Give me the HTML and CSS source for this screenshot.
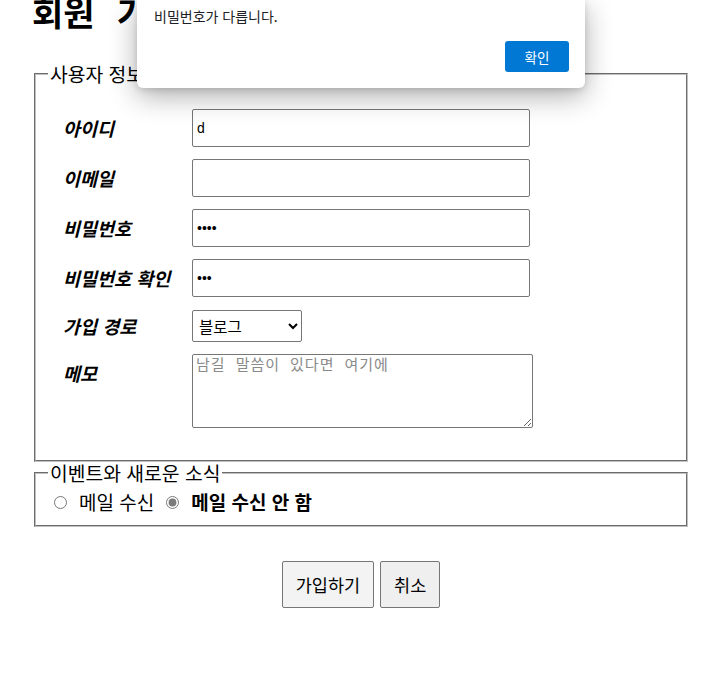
FILE: index.html
```html
<!DOCTYPE html>
<html lang="ko">
<head>
<meta charset="utf-8">
<title>회원 가입</title>
<link rel="stylesheet" href="styles.css">
</head>
<body>
<div class="page">
  <h1 class="title">회원 가입</h1>
  <form class="signup">
    <fieldset class="box box-user">
      <legend class="box-legend">사용자 정보</legend>
      <div class="fields">
        <label class="field-label" for="uid">아이디</label>
        <input class="text-input" id="uid" type="text" value="d">

        <label class="field-label" for="email">이메일</label>
        <input class="text-input" id="email" type="email">

        <label class="field-label" for="pw">비밀번호</label>
        <input class="text-input" id="pw" type="password" value="1234">

        <label class="field-label" for="pw2">비밀번호 확인</label>
        <input class="text-input" id="pw2" type="password" value="123">

        <label class="field-label" for="route">가입 경로</label>
        <select class="select-input" id="route">
          <option>블로그</option>
          <option>검색</option>
          <option>지인 추천</option>
        </select>

        <label class="field-label label-top" for="memo">메모</label>
        <textarea class="memo-input" id="memo" placeholder="남길 말씀이 있다면 여기에"></textarea>
      </div>
    </fieldset>

    <fieldset class="box box-news">
      <legend class="box-legend">이벤트와 새로운 소식</legend>
      <div class="radios">
        <input class="radio" type="radio" name="news" id="yes">
        <label class="radio-label" for="yes">메일 수신</label>
        <input class="radio radio-on" type="radio" name="news" id="no" checked>
        <label class="radio-label radio-label-on" for="no">메일 수신 안 함</label>
      </div>
    </fieldset>

    <div class="actions">
      <button class="btn" type="submit">가입하기</button>
      <button class="btn btn-cancel" type="reset">취소</button>
    </div>
  </form>
</div>

<div class="alert" role="alertdialog">
  <p class="alert-msg">비밀번호가 다릅니다.</p>
  <div class="alert-actions">
    <button class="alert-btn" type="button">확인</button>
  </div>
</div>
</body>
</html>
```

FILE: styles.css
```css
html, body {
  margin: 0;
  padding: 0;
  background: #fff;
}

body {
  font-family: "Noto Sans CJK KR", "Noto Sans", sans-serif;
  font-size: 19px;
  color: #000;
  position: relative;
  overflow: hidden;
  height: 674px;
}

.page {
  padding: 0 36px 0 34px;
}

.title {
  font-size: 34px;
  line-height: 34px;
  font-weight: 700;
  word-spacing: 13px;
  margin: -5px 0 32px -2px;
}

.signup {
  margin: 0;
}

.box {
  margin: 0;
  padding: 0 12px;
  border: 2px groove #c0c0c0;
}

.box-legend {
  padding: 0 2px;
  font-size: 19.3px;
  line-height: 26px;
}

.box-user {
  padding-top: 22px;
  padding-bottom: 32px;
}

.fields {
  display: grid;
  grid-template-columns: 129px auto;
  row-gap: 12px;
  align-items: center;
  justify-items: start;
  padding-left: 15px;
}

.field-label {
  font-size: 18.5px;
  font-weight: 700;
  font-style: italic;
  line-height: 24px;
}

.label-top {
  align-self: start;
  padding-top: 7px;
}

.text-input {
  box-sizing: border-box;
  width: 338px;
  height: 38px;
  border: 1px solid #767676;
  border-radius: 2px;
  padding: 0 4px;
  font-family: "Liberation Sans", "Noto Sans CJK KR", sans-serif;
  font-size: 14px;
  margin: 0;
}

.select-input {
  box-sizing: border-box;
  width: 110px;
  height: 32px;
  border: 1px solid #767676;
  border-radius: 2px;
  font-family: "Noto Sans CJK KR", sans-serif;
  font-size: 15.5px;
  margin: 1px 0 0;
  padding: 0 2px;
  background: #fff;
}

.memo-input {
  box-sizing: border-box;
  width: 341px;
  height: 74px;
  border: 1px solid #767676;
  border-radius: 2px;
  margin: 0;
  padding: 2px 3px;
  font-family: "DejaVu Sans Mono", "Noto Sans CJK KR", monospace;
  font-size: 15px;
  letter-spacing: 1px;
  line-height: 17px;
}

.memo-input::placeholder {
  color: #8a8a8a;
}

.box-news {
  margin-top: -2px;
  padding-top: 3px;
  padding-bottom: 10px;
}

.radios {
  display: flex;
  align-items: center;
  padding-left: 1px;
  line-height: 26px;
}

.radio {
  margin: 0 12px 0 5px;
  width: 13px;
  height: 13px;
  accent-color: #7a7a7a;
}

.radio-label {
  margin-right: 7px;
}

.radio-label-on {
  font-weight: 700;
}

.actions {
  display: flex;
  justify-content: center;
  gap: 6px;
  margin-top: 34px;
}

.btn {
  font-family: "Noto Sans CJK KR", sans-serif;
  font-size: 17.5px;
  line-height: 23px;
  padding: 11px 13px;
  border: 1px solid #767676;
  border-radius: 2px;
  background: #f3f3f3;
  color: #000;
  margin: 0;
}

.btn-cancel {
  background: #efefef;
}

.alert {
  position: absolute;
  left: 137px;
  top: 0;
  width: 448px;
  box-sizing: border-box;
  padding: 6px 16px 16px 17px;
  background: #fff;
  border-radius: 0 0 6px 6px;
  box-shadow: 0 8px 28px rgba(0, 0, 0, 0.32), 0 2px 6px rgba(0, 0, 0, 0.12);
}

.alert-msg {
  margin: 0;
  font-family: "Noto Sans CJK KR", sans-serif;
  font-size: 14px;
  line-height: 20px;
  color: #202124;
}

.alert-actions {
  display: flex;
  justify-content: flex-end;
  margin-top: 15px;
}

.alert-btn {
  width: 64px;
  height: 31px;
  border: none;
  border-radius: 3px;
  background: #0078d4;
  color: #fff;
  font-family: "Noto Sans CJK KR", sans-serif;
  font-size: 13.5px;
  padding: 0;
  margin: 0;
}
```
